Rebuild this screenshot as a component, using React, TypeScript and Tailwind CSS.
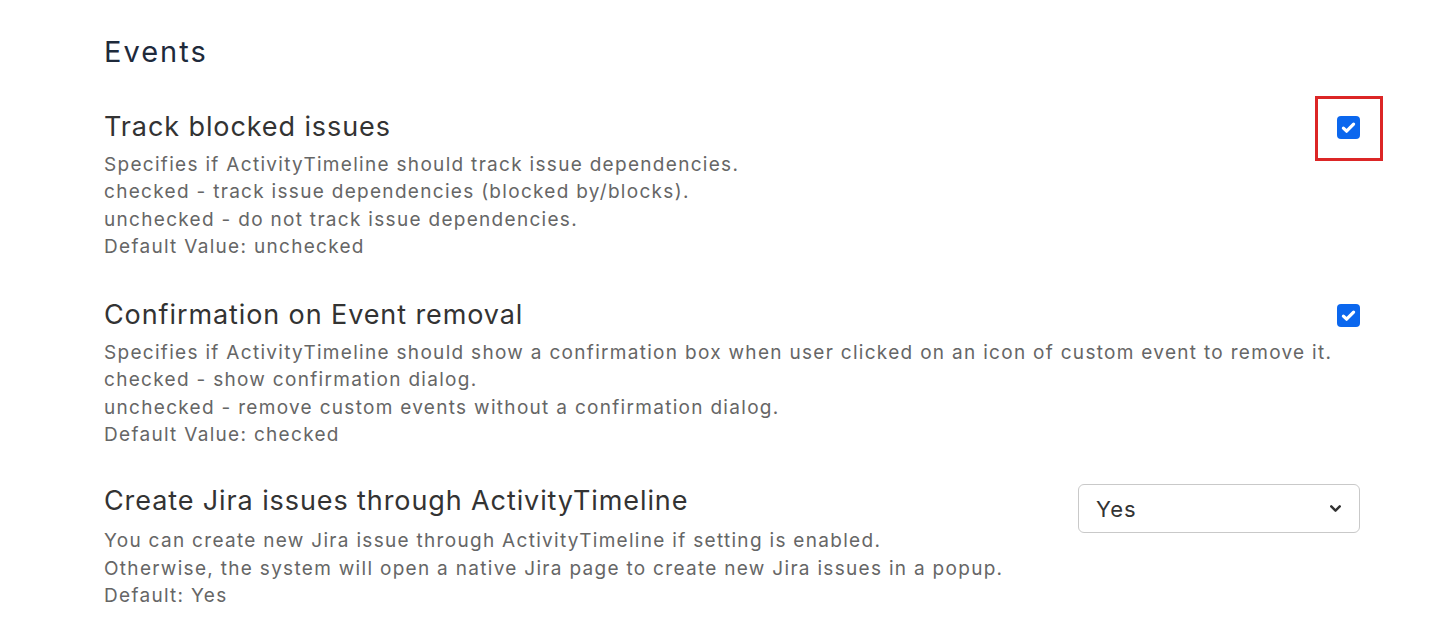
import { ChevronDown } from "lucide-react";

type Setting = {
  title: string;
  lines: string[];
  control: "checkbox" | "select";
  highlight?: boolean;
  spacing: string;
  descSpacing: string;
};

const settings: Setting[] = [
  {
    title: "Track blocked issues",
    lines: [
      "Specifies if ActivityTimeline should track issue dependencies.",
      "checked - track issue dependencies (blocked by/blocks).",
      "unchecked - do not track issue dependencies.",
      "Default Value: unchecked",
    ],
    control: "checkbox",
    highlight: true,
    spacing: "mt-[42px]",
    descSpacing: "mt-[8px]",
  },
  {
    title: "Confirmation on Event removal",
    lines: [
      "Specifies if ActivityTimeline should show a confirmation box when user clicked on an icon of custom event to remove it.",
      "checked - show confirmation dialog.",
      "unchecked - remove custom events without a confirmation dialog.",
      "Default Value: checked",
    ],
    control: "checkbox",
    spacing: "mt-[39px]",
    descSpacing: "mt-[8px]",
  },
  {
    title: "Create Jira issues through ActivityTimeline",
    lines: [
      "You can create new Jira issue through ActivityTimeline if setting is enabled.",
      "Otherwise, the system will open a native Jira page to create new Jira issues in a popup.",
      "Default: Yes",
    ],
    control: "select",
    spacing: "mt-[37px]",
    descSpacing: "mt-[10px]",
  },
];

function Checkbox({ highlight }: { highlight?: boolean }) {
  return (
    <div className="relative mt-[5px] h-[23px] w-[23px]">
      <div className="flex h-[23px] w-[23px] items-center justify-center rounded-[4px] bg-[#0b67ee]">
        <svg viewBox="0 0 16 16" className="h-[17px] w-[17px]" fill="none">
          <path d="M3.2 8.6l3 2.9L12.8 4.8" stroke="white" strokeWidth="3" strokeLinecap="round" strokeLinejoin="round" />
        </svg>
      </div>
      {highlight && (
        <div className="absolute -left-[22px] -top-[20px] h-[65px] w-[68px] border-[3px] border-[#dc2626]" />
      )}
    </div>
  );
}

function SelectBox() {
  return (
    <div className="-mt-[1px] flex h-[49px] w-[282px] items-center justify-between rounded-[6px] border border-[#c9c9c9] bg-white pl-[17px] pr-[15px]">
      <span className="pt-[2px] text-[22px] tracking-[1px] text-[#333]">Yes</span>
      <ChevronDown className="h-[17px] w-[17px] text-[#333]" strokeWidth={3.4} />
    </div>
  );
}

export default function App() {
  return (
    <div className="min-h-screen bg-white pl-[104px] pr-[80px] pt-[35px] font-['Inter',sans-serif]">
      <h2 className="text-[29px] leading-[34px] tracking-[2px] text-[#1e2a3b]">Events</h2>
      {settings.map((s) => (
        <div key={s.title} className={`${s.spacing} flex items-start justify-between`}>
          <div>
            <div className="text-[27px] leading-[32px] tracking-[0.9px] text-[#333]">{s.title}</div>
            <div className={`${s.descSpacing} text-[19px] leading-[27.3px] tracking-[1.3px] text-[#666]`}>
              {s.lines.map((l) => (
                <div key={l}>{l}</div>
              ))}
            </div>
          </div>
          {s.control === "checkbox" ? <Checkbox highlight={s.highlight} /> : <SelectBox />}
        </div>
      ))}
    </div>
  );
}
